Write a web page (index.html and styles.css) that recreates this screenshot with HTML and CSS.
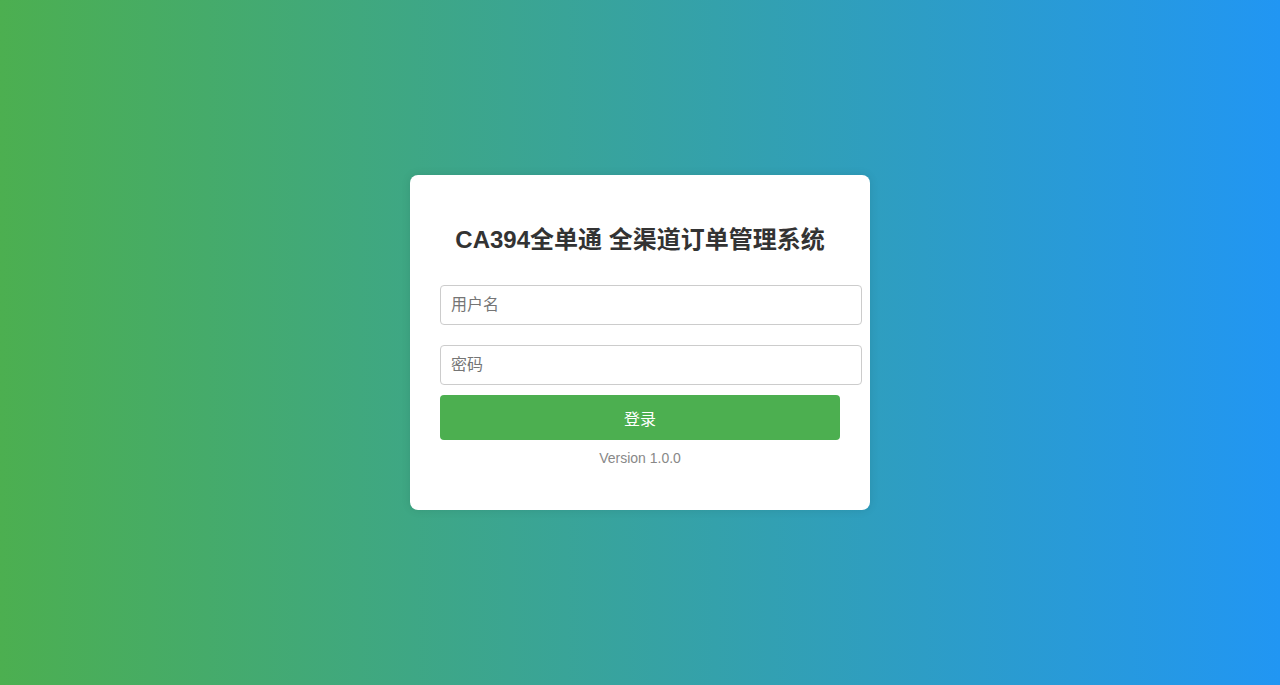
FILE: index.html
```html
<!DOCTYPE html>
<html lang="zh-CN">
<head>
<meta charset="utf-8">
<title>CA394全单通 全渠道订单管理系统</title>
<link rel="stylesheet" href="styles.css">
</head>
<body>
<div class="login-card">
  <h2 class="title">CA394全单通 全渠道订单管理系统</h2>
  <form class="login-form">
    <input class="field" type="text" placeholder="用户名">
    <input class="field" type="password" placeholder="密码">
    <button class="login-btn" type="button">登录</button>
  </form>
  <p class="version">Version 1.0.0</p>
</div>
</body>
</html>
```

FILE: styles.css
```css
html, body {
  margin: 0;
  padding: 0;
  height: 100%;
}
body {
  font-family: "Liberation Sans", Arial, "Noto Sans CJK SC", sans-serif;
  background: linear-gradient(to right, #4CAF50, #2196F3);
  display: flex;
  align-items: center;
  justify-content: center;
  height: 100vh;
}
.login-card {
  background: #fff;
  width: 400px;
  padding: 30px;
  border-radius: 8px;
  box-shadow: 0 0 10px rgba(0, 0, 0, 0.1);
}
.title {
  margin: 20px 0 20px;
  text-align: center;
  font-size: 24px;
  line-height: 30px;
  font-weight: bold;
  color: #333;
}
.login-form {
  margin: 0;
  display: flex;
  flex-direction: column;
  align-items: flex-start;
}
.field {
  display: block;
  width: 100%;
  margin: 10px 0;
  padding: 10px;
  box-sizing: content-box;
  height: 18px;
  font-size: 16px;
  line-height: 18px;
  font-family: "Liberation Sans", Arial, "Noto Sans CJK SC", sans-serif;
  border: 1px solid #ccc;
  border-radius: 4px;
  color: #333;
  outline: none;
  flex: none;
}
.field::placeholder {
  color: #757575;
}
.login-btn {
  display: block;
  width: 100%;
  height: 45px;
  margin: 0;
  border: none;
  border-radius: 4px;
  background: #4CAF50;
  color: #fff;
  font-size: 16px;
  font-family: "Liberation Sans", Arial, "Noto Sans CJK SC", sans-serif;
  cursor: pointer;
  flex: none;
}
.version {
  margin: 10px 0 14px;
  text-align: center;
  font-size: 14px;
  line-height: 16px;
  color: #888;
}
```
